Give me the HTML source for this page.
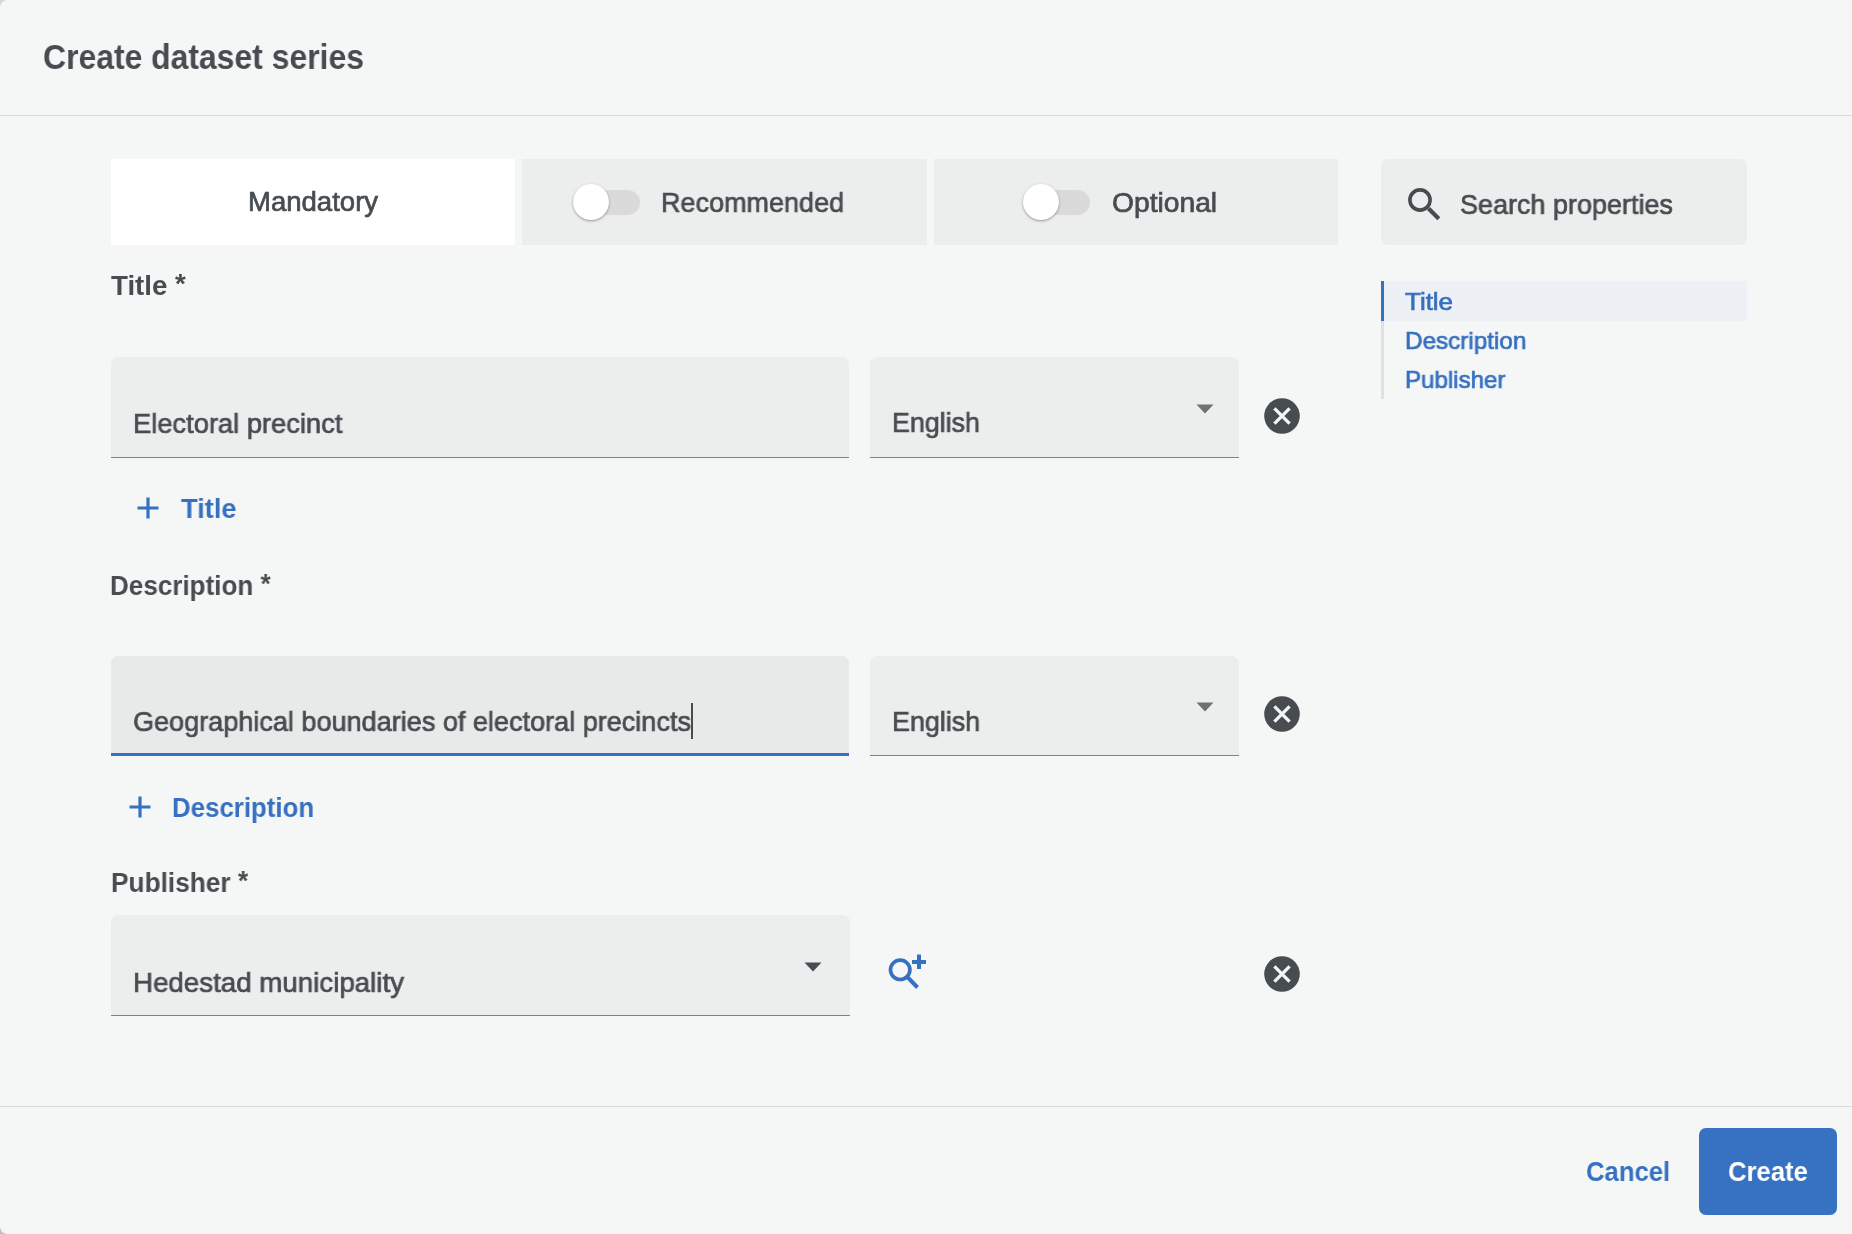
<!DOCTYPE html>
<html><head><meta charset="utf-8"><title>Create dataset series</title>
<style>
html,body{margin:0;padding:0;width:1852px;height:1234px;overflow:hidden;background:#f5f7f7;font-family:"Liberation Sans",sans-serif}
.t{position:absolute;white-space:nowrap;transform-origin:0 0;will-change:transform}
</style></head><body>
<div style="position:absolute;left:0;top:0;width:6px;height:6px;background:radial-gradient(circle at 6px 6px, rgba(213,216,219,0) 4.5px, #d3d6d9 6.5px)"></div>
<div style="position:absolute;left:0;top:1228px;width:6px;height:6px;background:radial-gradient(circle at 6px 0px, rgba(185,188,192,0) 4.5px, #b9bcc0 6.5px)"></div>
<div style="position:absolute;left:0px;top:115px;width:1852px;height:1px;background:#d8dbdb"></div>
<div style="position:absolute;left:111px;top:159px;width:404px;height:86px;background:#ffffff"></div>
<div style="position:absolute;left:522px;top:159px;width:405px;height:86px;background:#eceeee"></div>
<div style="position:absolute;left:934px;top:159px;width:404px;height:86px;background:#eceeee"></div>
<div style="position:absolute;left:574px;top:190px;width:66px;height:25px;background:#dadada;border-radius:12.5px"></div>
<div style="position:absolute;left:573px;top:184px;width:36px;height:36px;border-radius:50%;background:#fff;box-shadow:0 1px 2.5px rgba(0,0,0,.38)"></div>
<div style="position:absolute;left:1024px;top:190px;width:66px;height:25px;background:#dadada;border-radius:12.5px"></div>
<div style="position:absolute;left:1023px;top:184px;width:36px;height:36px;border-radius:50%;background:#fff;box-shadow:0 1px 2.5px rgba(0,0,0,.38)"></div>
<div style="position:absolute;left:1381px;top:159px;width:366px;height:86px;background:#eceeee;border-radius:7px"></div>
<svg style="position:absolute;left:1404px;top:184px" width="40" height="40" viewBox="0 0 40 40"><circle cx="16" cy="16" r="10.1" fill="none" stroke="#474c50" stroke-width="3.6"/><line x1="24.5" y1="24.5" x2="34.8" y2="34.8" stroke="#474c50" stroke-width="4.2"/></svg>
<div style="position:absolute;left:1381px;top:281px;width:3px;height:118px;background:#dde1e4"></div>
<div style="position:absolute;left:1381px;top:281px;width:3px;height:40px;background:#3670c0"></div>
<div style="position:absolute;left:1384px;top:281px;width:363px;height:40px;background:#edf0f4"></div>
<div style="position:absolute;left:111px;top:357px;width:738px;height:101px;background:#eceeee;border-radius:7px 7px 0 0;box-sizing:border-box;border-bottom:1px solid #7b848a"></div>
<div style="position:absolute;left:870px;top:357px;width:369px;height:101px;background:#eceeee;border-radius:7px 7px 0 0;box-sizing:border-box;border-bottom:1px solid #7b848a"></div>
<svg style="position:absolute;left:1196px;top:404px" width="18" height="10" viewBox="0 0 18 10"><path d="M0.5 0.5 L17.5 0.5 L9 9.5 Z" fill="#707070"/></svg>
<svg style="position:absolute;left:1264.4px;top:398.1px" width="36" height="36" viewBox="0 0 36 36"><circle cx="18" cy="18" r="17.8" fill="#474c50"/><path d="M10.4 10.4 L25.6 25.6 M25.6 10.4 L10.4 25.6" stroke="#f5f7f7" stroke-width="3.3"/></svg>
<svg style="position:absolute;left:137px;top:497px" width="22" height="22" viewBox="0 0 22 22"><path d="M11 0.5 V21.5 M0.5 11 H21.5" stroke="#3670c0" stroke-width="3.2"/></svg>
<div style="position:absolute;left:111px;top:656px;width:738px;height:100px;background:#e8e9e9;border-radius:7px 7px 0 0;box-sizing:border-box;border-bottom:3px solid #3670c0"></div>
<div style="position:absolute;left:870px;top:656px;width:369px;height:100px;background:#eceeee;border-radius:7px 7px 0 0;box-sizing:border-box;border-bottom:1px solid #7b848a"></div>
<svg style="position:absolute;left:1196px;top:702px" width="18" height="10" viewBox="0 0 18 10"><path d="M0.5 0.5 L17.5 0.5 L9 9.5 Z" fill="#707070"/></svg>
<svg style="position:absolute;left:1264.4px;top:696.1px" width="36" height="36" viewBox="0 0 36 36"><circle cx="18" cy="18" r="17.8" fill="#474c50"/><path d="M10.4 10.4 L25.6 25.6 M25.6 10.4 L10.4 25.6" stroke="#f5f7f7" stroke-width="3.3"/></svg>
<svg style="position:absolute;left:129px;top:796px" width="22" height="22" viewBox="0 0 22 22"><path d="M11 0.5 V21.5 M0.5 11 H21.5" stroke="#3670c0" stroke-width="3.2"/></svg>
<div style="position:absolute;left:691px;top:703px;width:2px;height:36px;background:#474c50"></div>
<div style="position:absolute;left:111px;top:915px;width:739px;height:101px;background:#eceeee;border-radius:7px 7px 0 0;box-sizing:border-box;border-bottom:1px solid #7b848a"></div>
<svg style="position:absolute;left:804px;top:962px" width="18" height="10" viewBox="0 0 18 10"><path d="M0.5 0.5 L17.5 0.5 L9 9.5 Z" fill="#474c50"/></svg>
<svg style="position:absolute;left:1264.4px;top:956.2px" width="36" height="36" viewBox="0 0 36 36"><circle cx="18" cy="18" r="17.8" fill="#474c50"/><path d="M10.4 10.4 L25.6 25.6 M25.6 10.4 L10.4 25.6" stroke="#f5f7f7" stroke-width="3.3"/></svg>
<svg style="position:absolute;left:884px;top:950px" width="46" height="44" viewBox="0 0 46 44"><circle cx="16.2" cy="19.8" r="9.7" fill="none" stroke="#3670c0" stroke-width="3.7"/><line x1="23" y1="26.6" x2="33.5" y2="37.5" stroke="#3670c0" stroke-width="4"/><path d="M35 4.5 V19 M28 12 H42" stroke="#3670c0" stroke-width="4"/></svg>
<div style="position:absolute;left:0px;top:1106px;width:1852px;height:1px;background:#d8dbdb"></div>
<div style="position:absolute;left:1699px;top:1128px;width:138px;height:87px;background:#3771c1;border-radius:7px"></div>
<div class="t" id="hdr" style="left:43.00px;top:39.00px;font-size:35.50px;line-height:36px;font-weight:bold;color:#474c50;transform:scaleX(0.8986)">Create dataset series</div>
<div class="t" id="tab1" style="left:248.00px;top:188.00px;font-size:27.50px;line-height:28px;-webkit-text-stroke:0.70px #474c50;color:#474c50;transform:scaleX(1.0012)">Mandatory</div>
<div class="t" id="tab2" style="left:661.00px;top:189.00px;font-size:27.50px;line-height:28px;-webkit-text-stroke:0.70px #474c50;color:#474c50;transform:scaleX(0.9816)">Recommended</div>
<div class="t" id="tab3" style="left:1112.00px;top:189.00px;font-size:27.50px;line-height:28px;-webkit-text-stroke:0.70px #474c50;color:#474c50;transform:scaleX(1.0265)">Optional</div>
<div class="t" id="srch" style="left:1460.00px;top:190.70px;font-size:27.50px;line-height:28px;-webkit-text-stroke:0.70px #474c50;color:#474c50;transform:scaleX(0.9811)">Search properties</div>
<div class="t" id="lbl1" style="left:111.20px;top:272.00px;font-size:27.50px;line-height:28px;font-weight:bold;color:#474c50;transform:scaleX(1.0058)">Title <span style="position:relative;top:-2px">*</span></div>
<div class="t" id="lbl2" style="left:110.40px;top:571.50px;font-size:27.50px;line-height:28px;font-weight:bold;color:#474c50;transform:scaleX(0.9469)">Description <span style="position:relative;top:-2px">*</span></div>
<div class="t" id="lbl3" style="left:110.80px;top:869.00px;font-size:27.50px;line-height:28px;font-weight:bold;color:#474c50;transform:scaleX(0.9547)">Publisher <span style="position:relative;top:-2px">*</span></div>
<div class="t" id="in1" style="left:133.00px;top:410.00px;font-size:27.75px;line-height:28px;-webkit-text-stroke:0.70px #474c50;color:#474c50;transform:scaleX(0.9838)">Electoral precinct</div>
<div class="t" id="sel1" style="left:892.20px;top:409.00px;font-size:28.00px;line-height:28px;-webkit-text-stroke:0.70px #474c50;color:#474c50;transform:scaleX(0.9572)">English</div>
<div class="t" id="in2" style="left:133.00px;top:708.00px;font-size:28.00px;line-height:28px;-webkit-text-stroke:0.70px #474c50;color:#474c50;transform:scaleX(0.9662)">Geographical boundaries of electoral precincts</div>
<div class="t" id="sel2" style="left:892.00px;top:707.70px;font-size:28.00px;line-height:28px;-webkit-text-stroke:0.70px #474c50;color:#474c50;transform:scaleX(0.9601)">English</div>
<div class="t" id="in3" style="left:132.60px;top:968.00px;font-size:28.25px;line-height:29px;-webkit-text-stroke:0.70px #474c50;color:#474c50;transform:scaleX(0.9806)">Hedestad municipality</div>
<div class="t" id="add1" style="left:181.00px;top:494.00px;font-size:28.25px;line-height:29px;font-weight:bold;color:#3670c0;transform:scaleX(0.9652)">Title</div>
<div class="t" id="add2" style="left:171.80px;top:794.00px;font-size:27.75px;line-height:28px;font-weight:bold;color:#3670c0;transform:scaleX(0.9310)">Description</div>
<div class="t" id="nav1" style="left:1405.20px;top:289.00px;font-size:24.75px;line-height:25px;-webkit-text-stroke:0.70px #3670c0;color:#3670c0;transform:scaleX(1.0483)">Title</div>
<div class="t" id="nav2" style="left:1405.00px;top:327.80px;font-size:24.50px;line-height:25px;-webkit-text-stroke:0.70px #3670c0;color:#3670c0;transform:scaleX(0.9901)">Description</div>
<div class="t" id="nav3" style="left:1405.00px;top:366.80px;font-size:24.50px;line-height:25px;-webkit-text-stroke:0.70px #3670c0;color:#3670c0;transform:scaleX(0.9836)">Publisher</div>
<div class="t" id="cancel" style="left:1586.00px;top:1158.00px;font-size:27.50px;line-height:28px;font-weight:bold;color:#3670c0;transform:scaleX(0.9330)">Cancel</div>
<div class="t" id="create" style="left:1728.00px;top:1158.20px;font-size:28.00px;line-height:28px;font-weight:bold;color:#ffffff;transform:scaleX(0.9162)">Create</div>
</body></html>
